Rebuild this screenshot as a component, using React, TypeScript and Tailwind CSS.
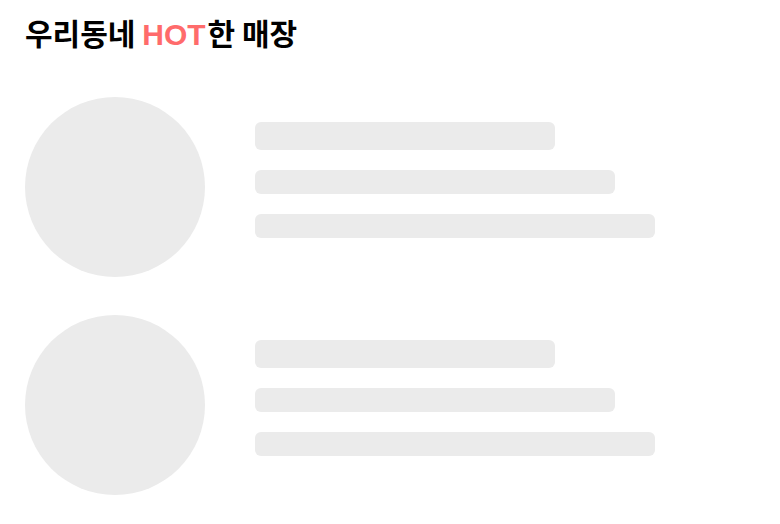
export default function App() {
  const rows = [0, 1];
  return (
    <div className="w-[780px] h-[524px] bg-white px-[25px] pt-[11px]" style={{ fontFamily: '"Noto Sans CJK KR", "Noto Sans", sans-serif' }}>
      <h1 className="h-[42px] text-[30px] font-bold leading-[42px] text-black whitespace-nowrap">
        우리동네{" "}
        <span className="text-[#ff6b6b] font-bold mr-[2px] leading-none" style={{ fontFamily: '"Liberation Sans", Arial, sans-serif' }}>
          HOT
        </span>
        한 매장
      </h1>
      <div className="mt-[44px] flex flex-col gap-[38px]">
        {rows.map((r) => (
          <div key={r} className="flex">
            <div className="w-[180px] h-[180px] rounded-full bg-[#ebebeb]" />
            <div className="ml-[50px] pt-[25px] flex flex-col">
              <div className="w-[300px] h-[28px] rounded-[6px] bg-[#ebebeb]" />
              <div className="mt-[20px] w-[360px] h-[24px] rounded-[6px] bg-[#ebebeb]" />
              <div className="mt-[20px] w-[400px] h-[24px] rounded-[6px] bg-[#ebebeb]" />
            </div>
          </div>
        ))}
      </div>
    </div>
  );
}
